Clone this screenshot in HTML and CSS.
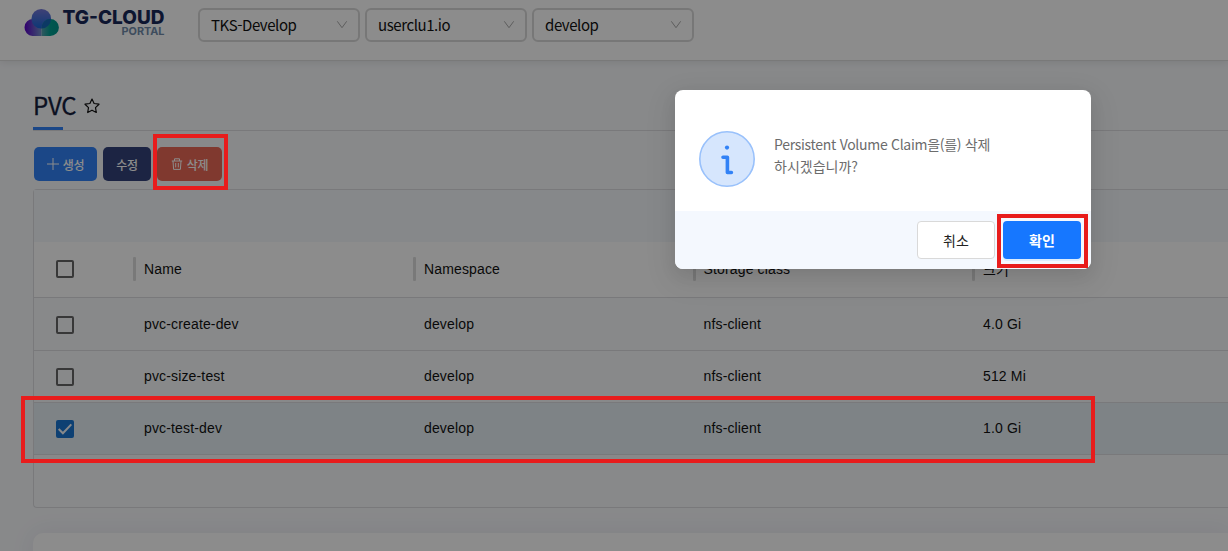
FILE: index.html
```html
<!DOCTYPE html>
<html lang="ko">
<head>
<meta charset="utf-8">
<title>TG-CLOUD PORTAL</title>
<link rel="stylesheet" href="styles.css">
</head>
<body>
<header class="header">
  <svg class="logo" width="142" height="32" viewBox="0 0 142 32">
    <defs>
      <linearGradient id="top" x1="0" y1="0" x2="0" y2="1"><stop offset="0" stop-color="#7477d8"/><stop offset="1" stop-color="#1765d8"/></linearGradient>
      <linearGradient id="left" x1="0" y1="0" x2="1" y2="0"><stop offset="0" stop-color="#5a00c8"/><stop offset=".9" stop-color="#6f86c8"/></linearGradient>
      <linearGradient id="right" x1="0" y1="0" x2="1" y2="0"><stop offset="0" stop-color="#5aa0b0"/><stop offset=".5" stop-color="#009f91"/><stop offset="1" stop-color="#00968b"/></linearGradient>
    </defs>
    <path d="M18.5 28H9.5a8.5 8.5 0 1 1 9-8.5z" fill="url(#left)"/>
    <circle cx="18.3" cy="10.8" r="9.8" fill="url(#top)"/>
    <path d="M18.5 28V19.5a8.7 8.5 0 1 1 8.7 8.5z" fill="url(#right)"/>
    <path d="M18.5 20.6V19.5A8.7 8.5 0 0 1 27.2 11H28A9.8 9.8 0 0 1 18.5 20.6z" fill="#1768b8"/>
    <text class="logo-name" x="39.5" y="15.8" textLength="102" lengthAdjust="spacingAndGlyphs">TG-CLOUD</text>
    <text class="logo-sub" x="98.5" y="27" textLength="43" lengthAdjust="spacingAndGlyphs">PORTAL</text>
  </svg>
  <nav class="selects">
    <div class="select">TKS-Develop<svg width="12" height="10" viewBox="0 0 12 10"><path d="M1.3 1.3 6 7.7l4.7-6.4"/></svg></div>
    <div class="select">userclu1.io<svg width="12" height="10" viewBox="0 0 12 10"><path d="M1.3 1.3 6 7.7l4.7-6.4"/></svg></div>
    <div class="select">develop<svg width="12" height="10" viewBox="0 0 12 10"><path d="M1.3 1.3 6 7.7l4.7-6.4"/></svg></div>
  </nav>
</header>
<main class="main">
  <div class="title">
    <h1>PVC</h1>
    <svg width="16" height="16" viewBox="0 0 16 16"><path d="M8 1.1l2.1 4.4 4.9.7-3.5 3.4.8 4.9L8 12.2l-4.3 2.3.8-4.9L1 6.2l4.9-.7z"/></svg>
  </div>
  <div class="actions">
    <button class="btn create"><svg width="12" height="12" viewBox="0 0 12 12"><path d="M6 0v12M0 6h12"/></svg>생성</button>
    <button class="btn edit">수정</button>
    <button class="btn delete"><svg width="12" height="12" viewBox="0 0 12 12"><path d="M.8 3h10.4M3.5 3V.8h5V3M2 3l.6 8.4h6.8L10 3M4.7 5v4.4M7.3 5v4.4"/></svg>삭제</button>
  </div>
  <section class="table">
    <div class="toolbar"></div>
    <div class="row head"><div><i class="box"></i></div><div>Name</div><div>Namespace</div><div>Storage class</div><div>크기</div></div>
    <div class="row"><div><i class="box"></i></div><div>pvc-create-dev</div><div>develop</div><div>nfs-client</div><div>4.0 Gi</div></div>
    <div class="row"><div><i class="box"></i></div><div>pvc-size-test</div><div>develop</div><div>nfs-client</div><div>512 Mi</div></div>
    <div class="row selected"><div><i class="box checked"><svg width="18" height="18" viewBox="0 0 18 18"><path d="M2.7 9l4.2 4.2 8.4-8.8"/></svg></i></div><div>pvc-test-dev</div><div>develop</div><div>nfs-client</div><div>1.0 Gi</div></div>
  </section>
  <section class="detail"></section>
</main>
<div class="mask"></div>
<div class="dialog">
  <div class="message">
    <svg width="56" height="56" viewBox="0 0 56 56">
      <circle cx="28" cy="28" r="27.2" fill="#d6e6fd" stroke="#99c1fb" stroke-width="1.6"/>
      <circle cx="28" cy="16.6" r="2.1" fill="#3282f6"/>
      <path d="M24 26.2h4.4v15.3h4" fill="none" stroke="#3282f6" stroke-width="3.6" stroke-linecap="round" stroke-linejoin="round"/>
    </svg>
    <p>Persistent Volume Claim을(를) 삭제<br><span class="ask">하시겠습니까?</span></p>
  </div>
  <div class="footer"><button class="cancel">취소</button><button class="ok">확인</button></div>
</div>
<div class="mark mark-delete"></div>
<div class="mark mark-ok"></div>
<div class="mark mark-row"></div>
</body>
</html>
```
FILE: styles.css
```css
* { box-sizing: border-box; }
body { margin: 0; height: 551px; overflow: hidden; background: #f8f9fc; color: #111; font-family: "Noto Sans CJK KR", sans-serif; }
button { font-family: inherit; border: 0; padding: 0; }
.header { display: flex; height: 61px; padding: 8px 0 0 23px; background: #fff; border-bottom: 1px solid #dcdcdc; box-shadow: 0 1px 8px rgba(0,0,0,.1); }
.logo { overflow: visible; }
.logo-name { font: 800 19px Inter, sans-serif; fill: #19285a; }
.logo-sub { font: 700 11px Inter, sans-serif; fill: #718baa; }
.selects { display: flex; gap: 5px; margin-left: 33px; }
.select { display: flex; align-items: center; justify-content: space-between; width: 162px; height: 34px; padding: 0 10px 0 11px; border: 2px solid #d9d9d9; border-radius: 6px; font-size: 15px; line-height: 22px; letter-spacing: -.42px; }
.select svg { margin-top: -1px; }
.select path { fill: none; stroke: #aaa; }
.main { padding: 25px 0 0 33px; }
.title { position: relative; display: flex; align-items: center; height: 45px; padding: 0 0 6px; border-bottom: 1px solid #dcdde0; }
.title::after { content: ""; position: absolute; left: 0; bottom: 0; width: 30px; height: 3px; background: #3282f6; }
h1 { margin: 0; font-size: 24px; font-weight: 400; line-height: 36px; letter-spacing: -.3px; color: #14203c; -webkit-text-stroke: .3px #14203c; }
.title svg { margin: 1px 0 0 8px; }
.title path { fill: none; stroke: #111; stroke-width: 1.2; stroke-linejoin: round; }
.actions { display: flex; gap: 6px; margin: 16px 0 8px 1px; }
.btn { display: flex; align-items: center; justify-content: center; gap: 4px; height: 34px; border-radius: 5px; color: #fff; font-size: 12px; font-weight: 500; letter-spacing: -.3px; }
.btn svg { fill: none; stroke: #fff; stroke-width: 1; }
.create { width: 63px; background: #3282f6; }
.edit { width: 48px; background: #34437a; }
.delete { width: 65px; background: #e96856; }
.table { height: 319px; border: 1px solid #dcdde0; border-right: 0; border-radius: 4px 0 0 4px; font: 14px "Liberation Sans", "Noto Sans CJK KR", sans-serif; letter-spacing: .15px; background: #f8fafc; }
.toolbar { height: 52px; background: #f5f8fc; }
.row { display: grid; grid-template-columns: 100px 280px 279.5px 279.5px 1fr; height: 52px; border-bottom: 1px solid #dcdde0; }
.row > div { display: flex; align-items: center; padding: 0 0 2px 10px; }
.row > div:first-child { padding: 0 0 0 22px; }
.head { height: 56px; background: #fff; color: #111; }
.head > div:not(:first-child)::before { content: ""; width: 3px; height: 24px; margin: 0 8px 0 -11px; border-radius: 1px; background: #ddd; }
.row.head > div:first-child { padding-bottom: 2px; }
.head + .row { height: 53px; }
.head + .row > div { padding-bottom: 0; }
.row.head + .row > div:first-child { padding-top: 2px; }
.selected { background: #e6eff5; }
.box { display: block; width: 18px; height: 18px; border: 2px solid #666; border-radius: 2px; }
.checked { border: 0; background: #1976d2; }
.checked svg { display: block; }
.checked path { fill: none; stroke: #f5f8fc; stroke-width: 2; }
.detail { height: 40px; margin-top: 25px; border-radius: 10px 0 0 0; background: #fff; box-shadow: 0 0 24px rgba(60,70,100,.08); }
.mask { position: absolute; inset: 0; background: rgba(0,0,0,.45); }
.dialog { position: absolute; left: 675px; top: 90px; width: 416px; height: 179px; overflow: hidden; border-radius: 8px; background: #fff; box-shadow: 0 6px 16px rgba(0,0,0,.08), 0 9px 28px 8px rgba(0,0,0,.05); }
.message { display: flex; gap: 19px; height: 121px; padding: 41px 24px 0; }
.message p { margin: 2px 0 0; color: #6c6c6c; font-size: 14px; line-height: 22px; letter-spacing: -.29px; }
.ask { letter-spacing: 0; }
.footer { display: flex; justify-content: flex-end; gap: 8px; height: 58px; padding: 10px 10px 0 0; background: #f4f8fe; }
.footer button { width: 78px; height: 38px; border-radius: 4px; font-size: 14px; }
.footer .cancel { border: 1px solid #d9d9d9; background: #fff; color: #222; }
.footer .ok { background: #1677ff; color: #fff; font-weight: 700; box-shadow: 0 2px 0 rgba(5,145,255,.1); }
.mark { position: absolute; border: 4px solid #e81c1c; }
.mark-delete { left: 153px; top: 134px; width: 75px; height: 56px; }
.mark-ok { left: 997px; top: 214px; width: 91px; height: 54px; }
.mark-row { left: 21px; top: 396px; width: 1074px; height: 67px; }
```
